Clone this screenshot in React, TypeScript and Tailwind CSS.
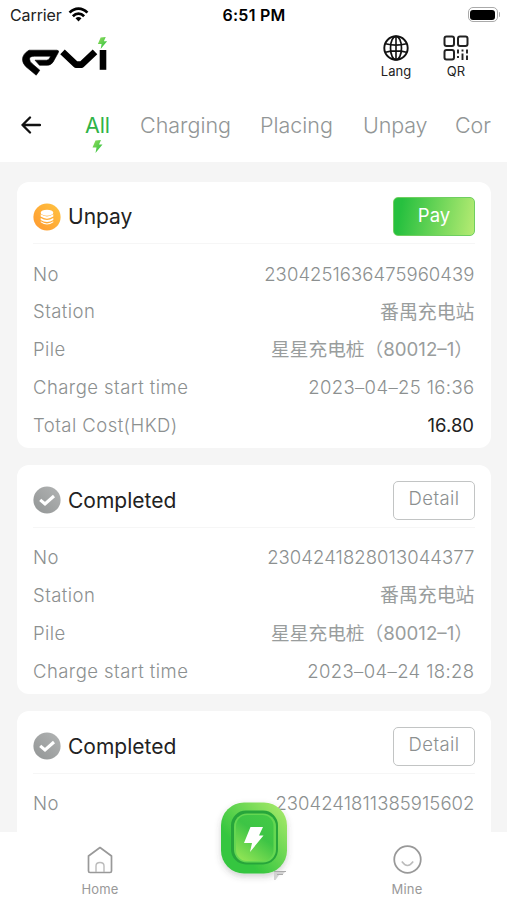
import type { ReactNode } from "react";

const Bolt = ({ className, id }: { className: string; id: string }) => (
  <svg viewBox="0 0 20 26" className={className}>
    <defs>
      <linearGradient id={id} x1="0" y1="0" x2="1" y2="1">
        <stop offset="0" stopColor="#94dc5c" />
        <stop offset="1" stopColor="#25bf3f" />
      </linearGradient>
    </defs>
    <path d="M6 1 L17 0 L13 9 L20 9 L6 26 L8 15 L0 15 Z" fill={`url(#${id})`} />
  </svg>
);

const StatusBar = () => (
  <div className="flex h-[29px] items-center text-[16px] text-[#222]">
    <div className="flex flex-1 items-center pl-[10px]">
      <span className="tracking-[-0.1px]">Carrier</span>
      <svg viewBox="0 0 22 16" className="ml-[6px] h-[15px] w-[21px]" fill="none" stroke="#000" strokeWidth="2.9">
        <path d="M1.5 6 C7 0.2 15 0.2 20.5 6" />
        <path d="M5 9.8 C8.5 6.3 13.5 6.3 17 9.8" />
        <path d="M7.8 12 Q11 9.2 14.2 12 L11 15.4 Z" fill="#000" stroke="none" />
      </svg>
    </div>
    <span className="mr-[2px] font-semibold tracking-[0.25px] text-black">6:51 PM</span>
    <div className="flex flex-1 items-center justify-end pr-[7px]">
      <div className="h-[15px] w-[30px] rounded-[5px] border border-[#aaa] p-[1.5px]">
        <div className="h-full rounded-[3px] bg-black" />
      </div>
      <div className="ml-px h-[5px] w-[1.5px] rounded-r bg-[#aaa]" />
    </div>
  </div>
);

const Logo = () => (
  <div className="relative h-[42px] w-[88px]">
    <svg viewBox="0 0 88 42" className="h-[42px] w-[88px]" fill="none" stroke="#000" strokeLinejoin="round">
      <path
        d="M7 13.2 H35 Q37.5 13.4 36.2 15.8 L31 25.2 Q29 28.3 25 28.3 H17.5 L13 23.2 H24.5 Q26.5 23.2 27.7 21 L28.6 19.2 H12.5 Q7.5 19.2 7.5 22 Q7.5 24.5 10.5 27 L17.8 33.2 L14.2 38.2 L4 29.8 Q0.5 26.5 0.5 22.5 Q0.5 17 7 13.2 Z"
        fill="#000"
        strokeWidth="0.6"
      />
      <path d="M40.5 14.8 L54 27.6 H59.5 L73 14.8" strokeWidth="6.6" />
      <path d="M81 13 V32.8" strokeWidth="6.6" />
    </svg>
    <Bolt id="logoBolt" className="absolute left-[75px] top-0 h-[12px] w-[11px]" />
  </div>
);

const TopBar = () => (
  <div className="flex h-[59px] pl-[22px] text-[13px] text-[#222]">
    <div className="flex-1 pt-[8px]"><Logo /></div>
    <div className="flex w-[60px] flex-col items-center pt-[6px]">
      <svg viewBox="0 0 26 26" className="h-[26px] w-[26px]" fill="none" stroke="#111" strokeWidth="1.9">
        <circle cx="13" cy="13" r="11.7" />
        <ellipse cx="13" cy="13" rx="5.5" ry="11.7" strokeWidth="1.7" />
        <path d="M13 1.3 V24.7 M2.5 8.8 Q13 11.5 23.5 8.8 M2.5 17.2 Q13 14.5 23.5 17.2" strokeWidth="1.6" />
      </svg>
      <span className="mt-[2px] leading-[17px]">Lang</span>
    </div>
    <div className="mr-[21px] flex w-[60px] flex-col items-center pt-[6px]">
      <svg viewBox="0 0 26 26" className="h-[26px] w-[26px]" fill="none" stroke="#222" strokeWidth="2">
        <rect x="1.5" y="1.5" width="9.5" height="9.5" rx="2" />
        <rect x="15" y="1.5" width="9.5" height="9.5" rx="2" />
        <rect x="1.5" y="15" width="9.5" height="9.5" rx="2" />
        <path d="M15 14.5 V18.5 M19.5 14.5 V16.5 M24 14.5 V18.5 M15 21 V23 M19.5 18.5 V25 M24 20.5 V25" strokeWidth="1.9" />
      </svg>
      <span className="mt-[2px] leading-[17px]">QR</span>
    </div>
  </div>
);

const Tabs = () => (
  <div className="flex h-[74px] shrink-0 items-start pt-[22px] text-[21.5px] font-light leading-[30px] text-[#929696]">
    <svg viewBox="0 0 20 18" className="ml-[21px] mt-[6px] h-[18px] w-[20px]" fill="none" stroke="#111" strokeWidth="2.3" strokeLinecap="round" strokeLinejoin="round">
      <path d="M9 1.5 L1.5 9 L9 16.5 M1.5 9 H19" />
    </svg>
    <div className="ml-[44px] mr-[16px] flex flex-1 overflow-hidden whitespace-nowrap">
      <div className="flex w-[55px] flex-col font-normal tracking-[-0.2px] text-[#2fb347]">
        <span>All</span>
        <Bolt id="tabBolt" className="ml-[7px] h-[13px] w-[11px]" />
      </div>
      <span className="w-[120px]">Charging</span>
      <span className="w-[103px]">Placing</span>
      <span className="w-[92px] tracking-[-0.1px]">Unpay</span>
      <span>Cor</span>
    </div>
  </div>
);

const CoinsIcon = () => (
  <svg viewBox="0 0 28 28" className="h-[28px] w-[28px]">
    <defs>
      <linearGradient id="coin" x1="0" y1="1" x2="1" y2="0">
        <stop offset="0" stopColor="#ff982f" />
        <stop offset="1" stopColor="#ffc441" />
      </linearGradient>
    </defs>
    <circle cx="14" cy="14" r="13.6" fill="url(#coin)" />
    <ellipse cx="14" cy="9.7" rx="6.3" ry="3" fill="#fff" />
    <path d="M7.7 11.3 Q14 15.5 20.3 11.3 V13.6 Q14 17.8 7.7 13.6Z M7.7 14.9 Q14 19.1 20.3 14.9 V17 Q14 21.2 7.7 17Z M7.7 18.3 Q14 22.5 20.3 18.3 V19.2 Q14 23.8 7.7 19.2Z" fill="#fff" />
  </svg>
);

const DoneIcon = () => (
  <svg viewBox="0 0 28 28" className="h-[28px] w-[28px]">
    <defs>
      <linearGradient id="done" x1="0" y1="1" x2="1" y2="0">
        <stop offset="0" stopColor="#929595" />
        <stop offset="1" stopColor="#b2b4b4" />
      </linearGradient>
    </defs>
    <circle cx="14" cy="14" r="13.6" fill="url(#done)" />
    <path d="M7.2 13.8 L12 18 L21 10" fill="none" stroke="#fff" strokeWidth="3.1" />
  </svg>
);

const Row = ({ label, children }: { label: string; children: ReactNode }) => (
  <div className="flex h-[37.8px] items-center justify-between">
    <span className="tracking-[0.45px]">{label}</span>
    {children}
  </div>
);

type Order = { paid: boolean; no: string; station?: string; pile?: string; start?: string; cost?: string };

const Card = ({ paid, no, station, pile, start, cost }: Order) => (
  <section className="rounded-[12px] bg-white px-[16px] pb-[4px] text-[18.5px] font-light text-[#8c9090]">
    <header className="mb-[11.5px] flex h-[62.5px] items-start border-b border-[#f6f6f6] pt-[15.5px]">
      <div className="flex flex-1 items-center pt-[5.5px]">
        {paid ? <DoneIcon /> : <CoinsIcon />}
        <h2 className="ml-[7px] pt-[0.5px] text-[21px] font-normal leading-[28px] text-[#222]">{paid ? "Completed" : "Unpay"}</h2>
      </div>
      {paid ? (
        <button className="h-[39px] w-[82px] rounded-[5px] border border-[#c2c4c4] pb-[3px] text-[18.5px] tracking-[0.4px]">Detail</button>
      ) : (
        <button className="h-[39px] w-[82px] rounded-[5px] border border-[#6fcf60] bg-linear-[100deg,#27c03f_10%,#b6eb73] pb-[2px] text-[18.5px] font-normal text-white">Pay</button>
      )}
    </header>
    <Row label="No"><span className="mr-[0.5px] tracking-[0.06px]">{no}</span></Row>
    {station && <Row label="Station"><span className="mr-[0.5px] pt-px text-[18.9px] font-normal text-[#999d9d]">{station}</span></Row>}
    {pile && <Row label="Pile"><span className="mr-[2px] pt-px text-[18.7px] font-normal text-[#999d9d]">{pile}</span></Row>}
    {start && <Row label="Charge start time"><span className="mr-[0.5px] tracking-[0.37px]">{start}</span></Row>}
    {cost && <Row label="Total Cost(HKD)"><span className="mr-px font-normal text-[#222]">{cost}</span></Row>}
  </section>
);

const BottomNav = () => (
  <nav className="absolute inset-x-0 bottom-0 flex h-[68px] justify-between bg-white px-[65px] text-[13px] text-[#999]">
    <div className="flex w-[70px] flex-col items-center pt-[14px]">
      <svg viewBox="0 0 26 28" className="h-[28px] w-[26px]" fill="none" stroke="#999" strokeWidth="1.7" strokeLinejoin="round">
        <path d="M1.5 10 L13 1.5 L24.5 10 V25 Q24.5 26.5 23 26.5 H3 Q1.5 26.5 1.5 25 Z" />
        <path d="M9 26 V20 Q9 16.5 13 16.5 Q17 16.5 17 20 V26" stroke="#bbb" strokeWidth="1.4" />
      </svg>
      <span className="mt-[6px] leading-[18px] tracking-[0.15px]">Home</span>
    </div>
    <div className="flex w-[70px] flex-col items-center pt-[13px]">
      <svg viewBox="0 0 28 28" className="h-[29px] w-[29px]" fill="none" stroke="#999" strokeWidth="1.7">
        <circle cx="14" cy="14" r="12.8" />
        <path d="M8.5 16 Q14 23.5 19.5 16" stroke="#bbb" strokeWidth="1.5" />
      </svg>
      <span className="mt-[6px] leading-[18px] tracking-[0.15px]">Mine</span>
    </div>
    <svg viewBox="0 0 90 100" className="absolute left-[209px] top-[-42px] h-[100px] w-[90px]">
      <defs>
        <linearGradient id="chargeOuter" x1="0.95" y1="0.1" x2="0.3" y2="0.7">
          <stop offset="0" stopColor="#a3e868" />
          <stop offset="1" stopColor="#35c63f" />
        </linearGradient>
        <linearGradient id="chargeInner" x1="0.8" y1="0" x2="0.2" y2="1">
          <stop offset="0" stopColor="#43c946" />
          <stop offset="0.4" stopColor="#3dc445" />
          <stop offset="1" stopColor="#8fe455" />
        </linearGradient>
        <filter id="chargeShadow" x="-30%" y="-30%" width="160%" height="160%">
          <feDropShadow dx="0" dy="3" stdDeviation="3" floodColor="#444" floodOpacity="0.25" />
        </filter>
      </defs>
      <rect x="12" y="12.5" width="66" height="71" rx="23" fill="url(#chargeOuter)" filter="url(#chargeShadow)" />
      <path d="M65 81 H77 L73 85 H70 L66.5 90 H65 Z" fill="#d2d2d2" />
      <path d="M65 81.5 H77 M68 84.5 H74" stroke="#a5a5a5" strokeWidth="0.9" />
      <rect x="22" y="20.5" width="47" height="54" rx="15" fill="#27a53b" />
      <rect x="25" y="23.5" width="42" height="49" rx="13" fill="#64d751" />
      <rect x="27" y="25" width="37.5" height="46" rx="11" fill="url(#chargeInner)" />
      <path d="M41.5 37 H54 L50 45.5 H54.5 L41 62 L43 53 H35 Z" fill="#fff" />
    </svg>
  </nav>
);

export default function App() {
  return (
    <div className="relative flex h-[900px] w-[507px] flex-col overflow-hidden bg-white font-[Inter,'Noto_Sans_CJK_SC',sans-serif]">
      <StatusBar />
      <TopBar />
      <Tabs />
      <main className="flex min-h-0 flex-1 flex-col gap-[16.7px] overflow-hidden bg-[#f5f5f5] pl-[17px] pr-[16px] pt-[19.5px] [&>*]:shrink-0 [&>*:last-child]:grow">
        <Card paid={false} no="2304251636475960439" station="番禺充电站" pile="星星充电桩（80012–1）" start="2023–04–25 16:36" cost="16.80" />
        <Card paid no="2304241828013044377" station="番禺充电站" pile="星星充电桩（80012–1）" start="2023–04–24 18:28" />
        <Card paid no="2304241811385915602" />
      </main>
      <BottomNav />
    </div>
  );
}
